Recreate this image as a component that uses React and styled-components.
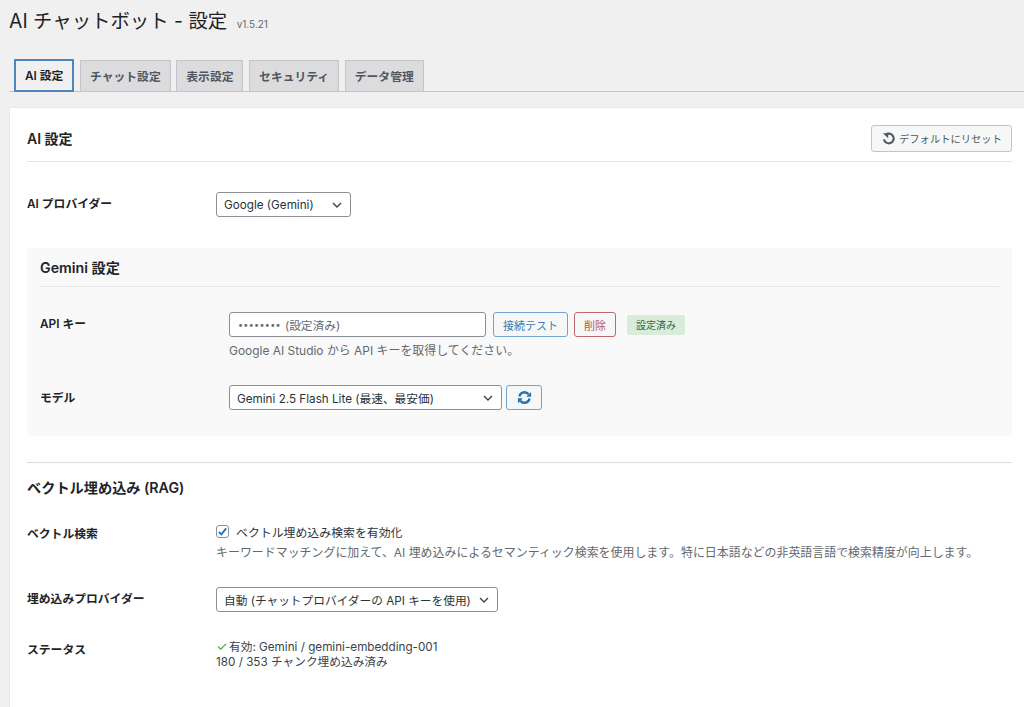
import React from "react"
import styled, { createGlobalStyle } from "styled-components"

const FONT = `Inter, "Noto Sans CJK JP", "Liberation Sans", sans-serif`

const Global = createGlobalStyle`
  html, body {
    margin: 0;
    padding: 0;
    background: #f0f0f1;
    color: #3c434a;
    font-family: ${FONT};
    font-size: 12px;
    overflow: hidden;
  }
`

const App = () => {
  return (
    <Wrap>
      <Global />
      <Title>
        AI チャットボット - 設定 <Version>v1.5.21</Version>
      </Title>
      <Tabs>
        <Tab $active>AI 設定</Tab>
        <Tab>チャット設定</Tab>
        <Tab>表示設定</Tab>
        <Tab>セキュリティ</Tab>
        <Tab>データ管理</Tab>
      </Tabs>
      <Card>
        <CardHeader>
          <CardTitle>AI 設定</CardTitle>
          <ResetButton>
            <svg width="13" height="13" viewBox="0 0 16 16" fill="none">
              <path
                d="M4.4 3.4A6 6 0 1 1 2.4 9"
                stroke="#50575e"
                strokeWidth="2.6"
              />
              <path d="M1.2 1.4h6.4v6.4z" fill="#50575e" />
            </svg>
            デフォルトにリセット
          </ResetButton>
        </CardHeader>

        <ProviderRow>
          <Label>AI プロバイダー</Label>
          <Select $width={135}>
            Google (Gemini)
            <Chevron />
          </Select>
        </ProviderRow>

        <Panel>
          <PanelTitle>Gemini 設定</PanelTitle>
          <ApiRow>
            <Label>API キー</Label>
            <div>
              <Controls>
                <KeyInput>
                  <KeyDots>••••••••</KeyDots>(設定済み)
                </KeyInput>
                <OutlineButton>接続テスト</OutlineButton>
                <OutlineButton $danger>削除</OutlineButton>
                <Badge>設定済み</Badge>
              </Controls>
              <Hint $gap={6}>Google AI Studio から API キーを取得してください。</Hint>
            </div>
          </ApiRow>
          <ModelRow>
            <Label>モデル</Label>
            <Controls>
              <Select $width={273}>
                Gemini 2.5 Flash Lite (最速、最安価)
                <Chevron />
              </Select>
              <RefreshButton>
                <svg width="15" height="15" viewBox="0 0 16 16" fill="none">
                  <path
                    d="M2.6 7A5.5 5.5 0 0 1 12.4 4.6M13.4 9A5.5 5.5 0 0 1 3.6 11.4"
                    stroke="#2271b1"
                    strokeWidth="2.5"
                  />
                  <path d="M15 2v5.2H9.8zM1 14V8.8h5.2z" fill="#2271b1" />
                </svg>
              </RefreshButton>
            </Controls>
          </ModelRow>
        </Panel>

        <Section>
          <SectionTitle>ベクトル埋め込み (RAG)</SectionTitle>
          <VectorRow>
            <Label>ベクトル検索</Label>
            <div>
              <CheckLine>
                <CheckBox>
                  <svg width="11" height="11" viewBox="0 0 12 12" fill="none">
                    <path d="M2 6.4l2.7 2.8L10 2.6" stroke="#2271b1" strokeWidth="2" />
                  </svg>
                </CheckBox>
                ベクトル埋め込み検索を有効化
              </CheckLine>
              <Hint $gap={5}>
                キーワードマッチングに加えて、AI 埋め込みによるセマンティック検索を使用します。特に日本語などの非英語言語で検索精度が向上します。
              </Hint>
            </div>
          </VectorRow>
          <EmbedRow>
            <Label>埋め込みプロバイダー</Label>
            <Select $width={282}>
              自動 (チャットプロバイダーの API キーを使用)
              <Chevron />
            </Select>
          </EmbedRow>
          <StatusRow>
            <Label>ステータス</Label>
            <StatusText>
              <div>
                <Tick>✓</Tick>有効: Gemini / gemini-embedding-001
              </div>
              <div>180 / 353 チャンク埋め込み済み</div>
            </StatusText>
          </StatusRow>
        </Section>
      </Card>
    </Wrap>
  )
}

const Chevron = () => (
  <ChevronIcon width="12" height="12" viewBox="0 0 12 12" fill="none">
    <path d="M2 4l4 4 4-4" stroke="#3c434a" strokeWidth="1.4" />
  </ChevronIcon>
)

const Wrap = styled.div`
  width: 1024px;
  height: 707px;
  overflow: hidden;
  padding-left: 9px;
  box-sizing: border-box;
`
const Title = styled.h1`
  margin: 0;
  height: 43px;
  font-size: 19.4px;
  font-weight: 400;
  line-height: 42px;
  color: #1d2327;
`
const Version = styled.span`
  margin-left: 4px;
  font-size: 10px;
  color: #646970;
`
const Tabs = styled.nav`
  display: flex;
  align-items: flex-end;
  gap: 5.6px;
  height: 49px;
  box-sizing: border-box;
  padding-left: 5px;
  border-bottom: 1px solid #c3c4c7;
`
const Tab = styled.div`
  display: flex;
  align-items: center;
  justify-content: center;
  box-sizing: border-box;
  height: ${p => (p.$active ? "33px" : "31px")};
  margin-bottom: ${p => (p.$active ? "-1px" : "0")};
  padding: 0 9px 2px;
  font-size: 11.8px;
  font-weight: 600;
  color: ${p => (p.$active ? "#1d2327" : "#50575e")};
  background: ${p => (p.$active ? "#f0f0f1" : "#dcdcde")};
  border: 1px solid #c3c4c7;
  border-bottom: none;
  ${p => p.$active && "border: 2px solid #4f84bd;"}
`
const Card = styled.main`
  margin: 16px 0 0 1px;
  padding: 0 12px 0 17px;
  height: 620px;
  background: #fff;
  box-shadow: 0 0 1px rgba(0, 0, 0, 0.2);
`
const CardHeader = styled.header`
  display: flex;
  justify-content: space-between;
  align-items: center;
  height: 54px;
  padding: 17px 0 9px;
  box-sizing: border-box;
  border-bottom: 1px solid #e4e4e6;
`
const CardTitle = styled.h2`
  margin: 0 0 2px;
  font-size: 14px;
  font-weight: 600;
  color: #1d2327;
`
const ResetButton = styled.button`
  display: flex;
  align-items: center;
  gap: 4px;
  flex: none;
  width: 141px;
  height: 27px;
  padding: 0 0 0 10px;
  box-sizing: border-box;
  font: 400 10.3px ${FONT};
  color: #50575e;
  background: #f6f7f7;
  border: 1px solid #c3c4c7;
  border-radius: 3px;
`
const Row = styled.div`
  display: grid;
  grid-template-columns: 189px 1fr;
`
const ProviderRow = styled(Row)`
  align-items: center;
  margin-top: 30px;
  > label {
    margin-bottom: 5px;
  }
`
const Label = styled.label`
  font-size: 11.8px;
  font-weight: 600;
  color: #1d2327;
`
const Select = styled.div`
  display: flex;
  align-items: center;
  justify-content: space-between;
  box-sizing: border-box;
  width: ${p => p.$width}px;
  height: 25px;
  padding: 0 7px;
  font-size: 11.7px;
  color: #2c3338;
  white-space: nowrap;
  background: #fff;
  border: 1px solid #8c8f94;
  border-radius: 3px;
`
const ChevronIcon = styled.svg`
  flex: none;
`
const Panel = styled.section`
  margin-top: 31px;
  height: 188px;
  padding: 0 13px;
  box-sizing: border-box;
  background: #f9f9f9;
`
const PanelTitle = styled.h3`
  display: flex;
  align-items: center;
  margin: 0;
  height: 38px;
  font-size: 14.2px;
  font-weight: 600;
  color: #1d2327;
  border-bottom: 1px solid #e4e4e6;
`
const ApiRow = styled(Row)`
  margin-top: 25px;
  > label {
    line-height: 24px;
  }
`
const Controls = styled.div`
  display: flex;
  align-items: center;
  gap: 6px;
`
const KeyInput = styled.div`
  display: flex;
  align-items: center;
  box-sizing: border-box;
  width: 257px;
  height: 25px;
  margin-right: 1px;
  padding: 0 8px;
  font-size: 11.7px;
  color: #646970;
  background: #fff;
  border: 1px solid #8c8f94;
  border-radius: 3px;
`
const KeyDots = styled.span`
  margin-right: 4px;
  font-size: 9px;
  letter-spacing: 0.3px;
`
const OutlineButton = styled.button`
  height: 25px;
  padding: 0 9px;
  font: 400 11px ${FONT};
  color: ${p => (p.$danger ? "#b85654" : "#3f7cb5")};
  background: #f6f7f7;
  border: 1px solid ${p => (p.$danger ? "#c4696a" : "#74a2cf")};
  border-radius: 3px;
`
const Badge = styled.span`
  margin-left: 5px;
  padding: 0 9px;
  height: 20px;
  line-height: 20px;
  font-size: 10px;
  color: #2f6b3e;
  background: #d9ecda;
  border-radius: 2px;
`
const Hint = styled.p`
  margin: ${p => p.$gap}px 0 0;
  font-size: 11.95px;
  line-height: 16px;
  color: #646970;
  white-space: nowrap;
`
const ModelRow = styled(Row)`
  align-items: center;
  margin-top: 26px;
  > label {
    margin-bottom: 3px;
  }
  ${Controls} {
    gap: 4px;
  }
`
const RefreshButton = styled.button`
  display: flex;
  align-items: center;
  justify-content: center;
  width: 36px;
  height: 25px;
  padding: 0;
  background: #f6f7f7;
  border: 1px solid #74a2cf;
  border-radius: 3px;
`
const Section = styled.section`
  margin-top: 26px;
  border-top: 1px solid #dcdcde;
`
const SectionTitle = styled.h3`
  margin: 16px 0 0;
  font-size: 14.2px;
  line-height: 18px;
  font-weight: 600;
  color: #1d2327;
`
const VectorRow = styled(Row)`
  margin-top: 25px;
  > label {
    line-height: 24px;
  }
`
const CheckLine = styled.div`
  display: flex;
  align-items: center;
  gap: 7px;
  height: 18px;
  font-size: 11.9px;
  color: #2c3338;
`
const CheckBox = styled.span`
  display: flex;
  align-items: center;
  justify-content: center;
  box-sizing: border-box;
  width: 13px;
  height: 13px;
  background: #fff;
  border: 1px solid #8c8f94;
  border-radius: 3px;
`
const EmbedRow = styled(Row)`
  align-items: center;
  margin-top: 26px;
  > label {
    margin-bottom: 5px;
  }
`
const StatusRow = styled(Row)`
  margin-top: 27px;
  > label {
    line-height: 20px;
    padding-top: 1px;
  }
`
const StatusText = styled.div`
  font-size: 11.7px;
  line-height: 15px;
  color: #3c434a;
`
const Tick = styled.span`
  display: inline-block;
  width: 13px;
  font-size: 13px;
  color: #3fa34d;
`

export default App
